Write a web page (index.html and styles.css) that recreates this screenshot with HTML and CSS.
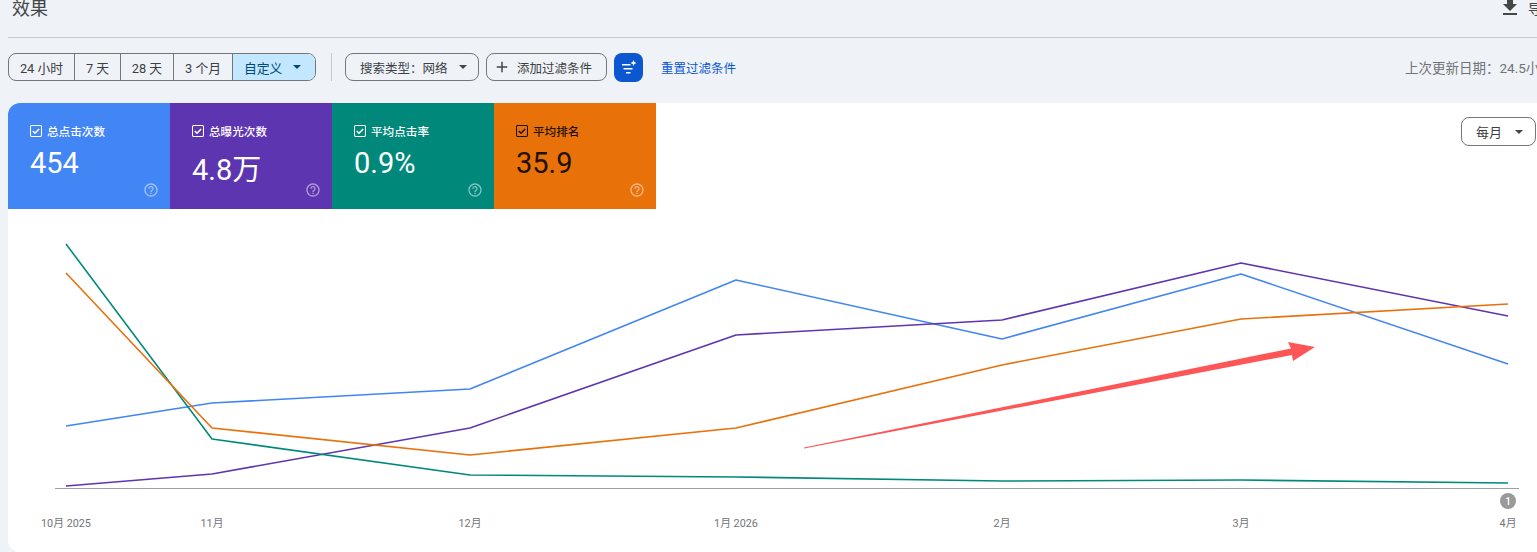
FILE: index.html
```html
<!DOCTYPE html>
<html lang="zh-CN">
<head>
<meta charset="utf-8">
<title>效果</title>
<link rel="stylesheet" href="styles.css">
</head>
<body>
<div class="page">
  <header class="head">
    <h1 class="title">效果</h1>
    <div class="export">
      <svg class="export-icon" viewBox="0 0 24 24"><path d="M19 9h-4V3H9v6H5l7 7 7-7zM5 18v2h14v-2H5z"/></svg>
      <span>导出</span>
    </div>
  </header>
  <div class="filters">
    <div class="segments">
      <button class="seg seg-24">24 小时</button>
      <button class="seg seg-7">7 天</button>
      <button class="seg seg-28">28 天</button>
      <button class="seg seg-3">3 个月</button>
      <button class="seg seg-custom">自定义<span class="caret"></span></button>
    </div>
    <div class="sep"></div>
    <button class="chip chip-type">搜索类型：网络<span class="caret caret-dark"></span></button>
    <button class="chip chip-add">
      <svg class="plus" viewBox="0 0 24 24"><path d="M19 13h-6v6h-2v-6H5v-2h6V5h2v6h6v2z"/></svg>
      添加过滤条件
    </button>
    <button class="magic">
      <svg viewBox="0 0 20 20" class="magic-icon"><path d="M3 7h8.500v1.500H3zM4.500 11h9v1.500h-9zM7 15h4.500v1.500H7z"/><path d="M14.500 3l.9 2.100 2.100.9-2.100.9-.9 2.100-.9-2.100-2.100-.9 2.100-.9z"/></svg>
    </button>
    <a class="reset">重置过滤条件</a>
    <div class="updated">上次更新日期：24.5小时前</div>
  </div>
  <section class="card">
    <div class="card-top">
      <div class="tiles">
        <div class="tile tile-blue">
          <div class="tile-label"><svg class="check" viewBox="0 0 12 12"><rect x=".5" y=".5" width="11" height="11" rx="1.200"/><path d="M2.800 6l2.200 2.200 4.200-4.200"/></svg>总点击次数</div>
          <div class="tile-value">454</div>
          <svg class="help" viewBox="0 0 24 24"><path d="M11 18h2v-2h-2v2zm1-16C6.480 2 2 6.480 2 12s4.480 10 10 10 10-4.480 10-10S17.520 2 12 2zm0 18c-4.410 0-8-3.590-8-8s3.590-8 8-8 8 3.590 8 8-3.590 8-8 8zm0-14c-2.210 0-4 1.790-4 4h2c0-1.100.9-2 2-2s2 .9 2 2c0 2-3 1.750-3 5h2c0-2.250 3-2.500 3-5 0-2.210-1.790-4-4-4z"/></svg>
        </div>
        <div class="tile tile-purple">
          <div class="tile-label"><svg class="check" viewBox="0 0 12 12"><rect x=".5" y=".5" width="11" height="11" rx="1.200"/><path d="M2.800 6l2.200 2.200 4.200-4.200"/></svg>总曝光次数</div>
          <div class="tile-value">4.8万</div>
          <svg class="help" viewBox="0 0 24 24"><path d="M11 18h2v-2h-2v2zm1-16C6.480 2 2 6.480 2 12s4.480 10 10 10 10-4.480 10-10S17.520 2 12 2zm0 18c-4.410 0-8-3.590-8-8s3.590-8 8-8 8 3.590 8 8-3.590 8-8 8zm0-14c-2.210 0-4 1.790-4 4h2c0-1.100.9-2 2-2s2 .9 2 2c0 2-3 1.750-3 5h2c0-2.250 3-2.500 3-5 0-2.210-1.790-4-4-4z"/></svg>
        </div>
        <div class="tile tile-teal">
          <div class="tile-label"><svg class="check" viewBox="0 0 12 12"><rect x=".5" y=".5" width="11" height="11" rx="1.200"/><path d="M2.800 6l2.200 2.200 4.200-4.200"/></svg>平均点击率</div>
          <div class="tile-value">0.9%</div>
          <svg class="help" viewBox="0 0 24 24"><path d="M11 18h2v-2h-2v2zm1-16C6.480 2 2 6.480 2 12s4.480 10 10 10 10-4.480 10-10S17.520 2 12 2zm0 18c-4.410 0-8-3.590-8-8s3.590-8 8-8 8 3.590 8 8-3.590 8-8 8zm0-14c-2.210 0-4 1.790-4 4h2c0-1.100.9-2 2-2s2 .9 2 2c0 2-3 1.750-3 5h2c0-2.250 3-2.500 3-5 0-2.210-1.790-4-4-4z"/></svg>
        </div>
        <div class="tile tile-orange">
          <div class="tile-label"><svg class="check" viewBox="0 0 12 12"><rect x=".5" y=".5" width="11" height="11" rx="1.200"/><path d="M2.800 6l2.200 2.200 4.200-4.200"/></svg>平均排名</div>
          <div class="tile-value">35.9</div>
          <svg class="help" viewBox="0 0 24 24"><path d="M11 18h2v-2h-2v2zm1-16C6.480 2 2 6.480 2 12s4.480 10 10 10 10-4.480 10-10S17.520 2 12 2zm0 18c-4.410 0-8-3.590-8-8s3.590-8 8-8 8 3.590 8 8-3.590 8-8 8zm0-14c-2.210 0-4 1.790-4 4h2c0-1.100.9-2 2-2s2 .9 2 2c0 2-3 1.750-3 5h2c0-2.250 3-2.500 3-5 0-2.210-1.790-4-4-4z"/></svg>
        </div>
      </div>
      <button class="period">每月<span class="caret caret-dark"></span></button>
    </div>
    <svg class="chart" viewBox="8 209 1552 343" width="1552" height="343">
      <line class="axis" x1="55" y1="488.500" x2="1519" y2="488.500"/>
      <polyline class="line l-blue" points="66,426 212,403 470,389 736,280 1002,339 1241,274 1508,364"/>
      <polyline class="line l-purple" points="66,486 212,474 470,428 736,335 1002,320 1241,263 1508,316"/>
      <polyline class="line l-teal" points="66,244 212,439 470,475 736,477 1002,481 1241,480 1508,483"/>
      <polyline class="line l-orange" points="66,273 212,428 470,455 736,428 1002,365 1241,319 1508,304"/>
      <polygon class="arrow" points="804,447.500 1291,348.500 1288,342 1315,347 1293,361 1292,355 804,448.500"/>
      <circle class="badge" cx="1508" cy="501" r="8"/>
      <text class="badge-text" x="1508" y="504.500">1</text>
      <text class="tick" x="66" y="527">10月 2025</text>
      <text class="tick" x="212" y="527">11月</text>
      <text class="tick" x="470" y="527">12月</text>
      <text class="tick" x="736" y="527">1月 2026</text>
      <text class="tick" x="1002" y="527">2月</text>
      <text class="tick" x="1241" y="527">3月</text>
      <text class="tick" x="1508" y="527">4月</text>
    </svg>
  </section>
</div>
</body>
</html>
```
FILE: styles.css
```css
* { box-sizing: border-box; }
html, body { margin: 0; height: 552px; overflow: hidden; background: #eff3f8; }
body { font-family: Roboto, "Noto Sans CJK SC", sans-serif; color: #3c4043; }
button { font: inherit; background: none; margin: 0; cursor: pointer; }

.page { width: 1560px; padding-left: 8px; margin-top: -3px; }

.head { display: flex; justify-content: space-between; height: 41px; border-bottom: 1px solid #c7c9cc; padding-left: 4px; }
.title { margin: 0; font-size: 18px; font-weight: 400; line-height: 24px; color: #444746; }
.export { display: flex; align-items: flex-start; width: 62px; gap: 6px; font-size: 14px; line-height: 24px; color: #444746; }
.export-icon { width: 24px; height: 24px; margin-top: -2px; fill: #444746; }

.filters { display: flex; align-items: center; height: 28px; margin-top: 15px; }
.segments { display: flex; height: 28px; border: 1px solid #747775; border-radius: 8px; overflow: hidden; }
.seg { border: 0; border-right: 1px solid #747775; padding: 0; font-size: 12.800px; color: #3c4043; display: flex; align-items: center; justify-content: center; }
.seg-24 { width: 66px; }
.seg-7 { width: 46px; }
.seg-28 { width: 53px; }
.seg-3 { width: 59px; }
.seg-custom { width: 82px; border-right: 0; background: #c2e7ff; color: #004a77; justify-content: flex-start; padding-left: 11px; }

.caret { width: 0; height: 0; margin-left: 11px; border-left: 4px solid transparent; border-right: 4px solid transparent; border-top: 4px solid #004a77; }
.caret-dark { border-top-color: #444746; }

.sep { width: 1px; height: 28px; background: #c7c9cc; margin: 0 13px 0 15px; }

.chip { height: 28px; border: 1px solid #747775; border-radius: 8px; display: flex; align-items: center; font-size: 12.500px; color: #3c4043; padding: 0; }
.chip-type { width: 134px; padding-left: 14px; }
.chip-add { width: 121px; margin-left: 7px; padding-left: 6px; gap: 6px; }
.plus { width: 18px; height: 18px; fill: #444746; }

.magic { width: 29px; height: 29px; margin-left: 7px; border: 0; border-radius: 8px; background: #0b57d0; display: flex; align-items: center; justify-content: center; padding: 0; }
.magic-icon { width: 20px; height: 20px; fill: #fff; }

.reset { margin-left: 18px; font-size: 12.500px; color: #0b57d0; }
.updated { position: absolute; left: 1405px; font-size: 13.500px; color: #6f7276; white-space: nowrap; }

.card { width: 1552px; height: 449px; margin-top: 22px; background: #fff; border-radius: 12px; overflow: hidden; }
.card-top { display: flex; justify-content: space-between; align-items: flex-start; }
.tiles { display: flex; }
.tile { position: relative; width: 162px; height: 106px; padding: 20px 0 0 22px; color: #fff; }
.tile-blue { background: #4285f4; }
.tile-purple { background: #5e35b1; }
.tile-teal { background: #00897b; }
.tile-orange { background: #e8710a; color: #1f1200; }
.tile-label { display: flex; align-items: center; gap: 5px; height: 16px; font-size: 11.600px; font-weight: 500; }
.check { width: 12px; height: 12px; fill: none; stroke: currentColor; stroke-width: 1.100; }
.check path { stroke-width: 1.600; }
.tile-value { margin-top: 7px; font-size: 29px; font-weight: 400; }
.help { position: absolute; right: 11px; bottom: 11px; width: 16px; height: 16px; fill: #fff; opacity: .5; }

.period { width: 75px; height: 29px; margin: 14px 24px 0 0; border: 1px solid #747775; border-radius: 8px; display: flex; align-items: center; padding: 0 0 0 14px; font-size: 13px; color: #3c4043; }
.period .caret { margin-left: 13px; }

.chart { display: block; }
.axis { stroke: #9aa0a6; stroke-width: 1; }
.line { fill: none; stroke-width: 1.600; stroke-linejoin: round; }
.l-blue { stroke: #4285f4; }
.l-purple { stroke: #5e35b1; }
.l-teal { stroke: #00897b; }
.l-orange { stroke: #e8710a; }
.arrow { fill: #fe5656; }
.badge { fill: #9a9a9a; }
.badge-text { fill: #fff; font-size: 10px; font-weight: 500; text-anchor: middle; }
.tick { fill: #70757a; font-size: 10.800px; text-anchor: middle; }
```
